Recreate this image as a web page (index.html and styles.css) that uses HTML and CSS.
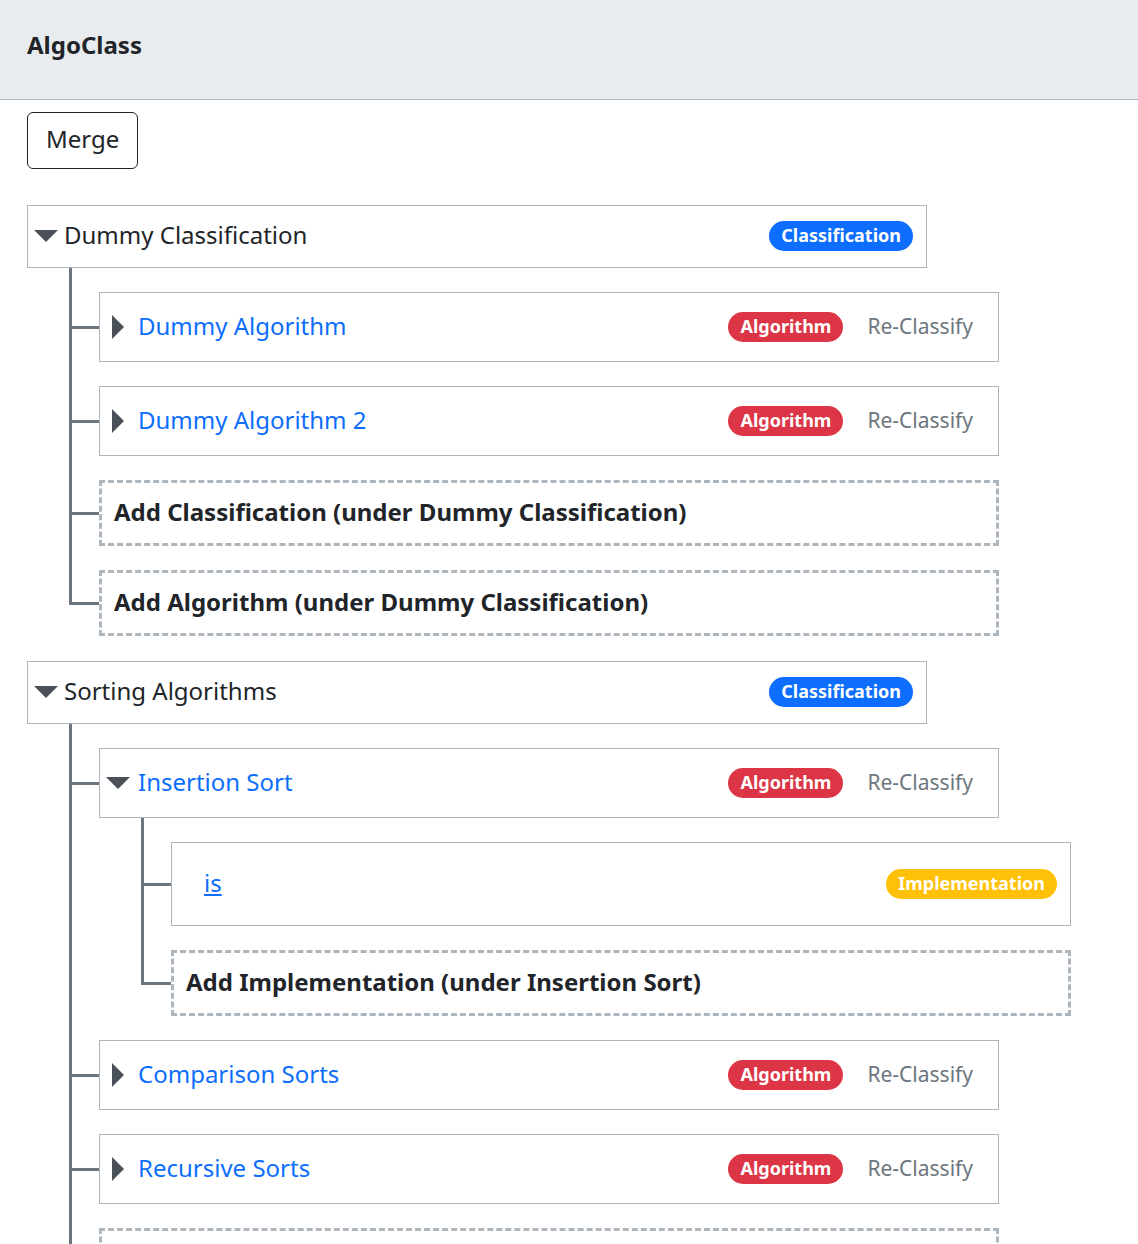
FILE: index.html
```html
<!DOCTYPE html>
<html lang="en">
<head>
  <meta charset="utf-8">
  <meta name="viewport" content="width=device-width, initial-scale=1">
  <title>AlgoClass</title>
  <link rel="stylesheet" href="styles.css">
</head>
<body>
  <svg class="sprite" aria-hidden="true">
    <symbol id="caret-down" viewBox="0 0 24 24"><path d="M0 6h24L12 18z"/></symbol>
    <symbol id="caret-right" viewBox="0 0 24 24"><path d="M6 0v24l12-12z"/></symbol>
  </svg>
  <header class="site-header">
    <h1 class="site-title">AlgoClass</h1>
  </header>
  <main class="content">
    <button class="merge" type="button">Merge</button>
    <ul class="tree">
      <li class="item">
        <div class="node classification">
          <button class="toggle" type="button" aria-label="Collapse Dummy Classification" aria-expanded="true"><svg><use href="#caret-down"/></svg></button>
          <span class="title">Dummy Classification</span>
          <span class="badge badge-blue">Classification</span>
        </div>
        <ul class="children">
          <li class="item">
            <div class="node algorithm">
              <button class="toggle" type="button" aria-label="Expand Dummy Algorithm" aria-expanded="false"><svg><use href="#caret-right"/></svg></button>
              <a class="title" href="#dummy-algorithm">Dummy Algorithm</a>
              <span class="badge badge-red">Algorithm</span>
              <button class="reclassify" type="button">Re-Classify</button>
            </div>
          </li>
          <li class="item">
            <div class="node algorithm">
              <button class="toggle" type="button" aria-label="Expand Dummy Algorithm 2" aria-expanded="false"><svg><use href="#caret-right"/></svg></button>
              <a class="title" href="#dummy-algorithm-2">Dummy Algorithm 2</a>
              <span class="badge badge-red">Algorithm</span>
              <button class="reclassify" type="button">Re-Classify</button>
            </div>
          </li>
          <li class="item">
            <button class="node add" type="button">Add Classification (under Dummy Classification)</button>
          </li>
          <li class="item">
            <button class="node add" type="button">Add Algorithm (under Dummy Classification)</button>
          </li>
        </ul>
      </li>
      <li class="item">
        <div class="node classification">
          <button class="toggle" type="button" aria-label="Collapse Sorting Algorithms" aria-expanded="true"><svg><use href="#caret-down"/></svg></button>
          <span class="title">Sorting Algorithms</span>
          <span class="badge badge-blue">Classification</span>
        </div>
        <ul class="children">
          <li class="item">
            <div class="node algorithm">
              <button class="toggle" type="button" aria-label="Collapse Insertion Sort" aria-expanded="true"><svg><use href="#caret-down"/></svg></button>
              <a class="title" href="#insertion-sort">Insertion Sort</a>
              <span class="badge badge-red">Algorithm</span>
              <button class="reclassify" type="button">Re-Classify</button>
            </div>
            <ul class="children">
              <li class="item">
                <div class="node implementation">
                  <a class="title" href="#is">is</a>
                  <span class="badge badge-yellow">Implementation</span>
                </div>
              </li>
              <li class="item">
                <button class="node add" type="button">Add Implementation (under Insertion Sort)</button>
              </li>
            </ul>
          </li>
          <li class="item">
            <div class="node algorithm">
              <button class="toggle" type="button" aria-label="Expand Comparison Sorts" aria-expanded="false"><svg><use href="#caret-right"/></svg></button>
              <a class="title" href="#comparison-sorts">Comparison Sorts</a>
              <span class="badge badge-red">Algorithm</span>
              <button class="reclassify" type="button">Re-Classify</button>
            </div>
          </li>
          <li class="item">
            <div class="node algorithm">
              <button class="toggle" type="button" aria-label="Expand Recursive Sorts" aria-expanded="false"><svg><use href="#caret-right"/></svg></button>
              <a class="title" href="#recursive-sorts">Recursive Sorts</a>
              <span class="badge badge-red">Algorithm</span>
              <button class="reclassify" type="button">Re-Classify</button>
            </div>
          </li>
          <li class="item">
            <button class="node add" type="button">Add Classification (under Sorting Algorithms)</button>
          </li>
          <li class="item">
            <button class="node add" type="button">Add Algorithm (under Sorting Algorithms)</button>
          </li>
        </ul>
      </li>
    </ul>
  </main>
</body>
</html>
```
FILE: styles.css
```css
*,
*::before,
*::after {
  box-sizing: border-box;
}

body {
  margin: 0;
  background: #fff;
  color: #212529;
  font: 24px/36px "Noto Sans", "Liberation Sans", sans-serif;
}

button {
  margin: 0;
  color: inherit;
  font: inherit;
  cursor: pointer;
}

.sprite {
  display: none;
}

.site-header {
  padding: 27px 27px 36px;
  border-bottom: 1px solid #adb5bd;
  background: #e9ecef;
}

.site-title {
  margin: 0;
  font-size: 24px;
  font-weight: 700;
}

.content {
  padding: 12px 27px 36px;
}

.merge {
  padding: 8px 18px 11px;
  border: 1px solid #212529;
  border-radius: 6px;
  background: transparent;
}

/* Tree */
.tree,
.children {
  display: flex;
  flex-direction: column;
  margin: 0;
  padding: 0;
  list-style: none;
}

.tree {
  gap: 25px;
  margin-top: 36px;
}

.children {
  gap: 24px;
  margin: 24px 0 0 72px;
}

.item {
  position: relative;
}

.node {
  --edge: 1px;
  position: relative;
  display: flex;
  align-items: center;
  width: 100%;
  max-width: 900px;
  padding: 0 13px 0 6px;
  border: var(--edge) solid #adb5bd;
  background: #fff;
}

.classification {
  min-height: 63px;
  padding-bottom: 2px;
}

.algorithm {
  min-height: 70px;
}

.implementation {
  min-height: 84px;
  padding-left: 32px;
}

.add {
  --edge: 3px;
  min-height: 66px;
  padding: 11px 12px 13px;
  border-style: dashed;
  font-weight: 700;
  text-align: left;
}

/* Elbow from the trunk line to a node */
.children > .item > .node::before {
  content: "";
  position: absolute;
  top: calc(-24px - var(--edge));
  bottom: calc(50% - 2px);
  left: calc(-30px - var(--edge));
  width: 30px;
  border: solid #6c757d;
  border-width: 0 0 3px 3px;
}

/* Trunk line past every node except the last */
.children > .item:not(:last-child)::after {
  content: "";
  position: absolute;
  top: 0;
  bottom: 0;
  left: -30px;
  width: 3px;
  background: #6c757d;
}

.toggle {
  display: flex;
  margin-right: 6px;
  padding: 0;
  border: 0;
  background: none;
}

.algorithm .toggle {
  margin-right: 8px;
}

.toggle svg {
  width: 24px;
  height: 24px;
  fill: #495057;
}

.title {
  margin-right: auto;
  padding-bottom: 2px;
}

a.title {
  color: #0d6efd;
  text-decoration: none;
}

.implementation a.title {
  text-decoration: underline;
}

.badge {
  padding: 5px 12px 7px;
  border-radius: 15px;
  color: #fff;
  font-size: 18px;
  font-weight: 700;
  line-height: 18px;
}

.badge-blue {
  background: #0d6efd;
}

.badge-red {
  background: #dc3545;
}

.badge-yellow {
  background: #ffc107;
}

.reclassify {
  margin-left: 12px;
  padding: 0 12px 2px;
  border: 0;
  background: none;
  color: #6c757d;
  font-size: 21px;
  line-height: 32px;
}
```
